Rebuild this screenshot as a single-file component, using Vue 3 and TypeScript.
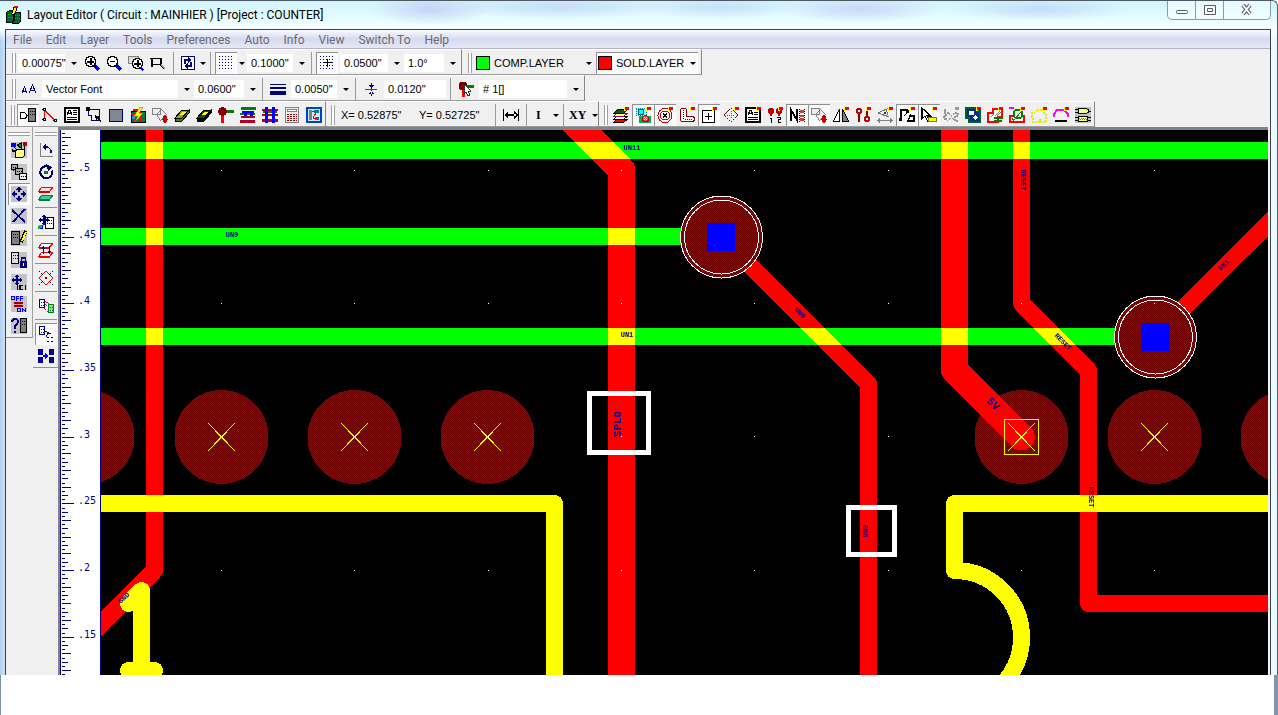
<script setup lang="ts">
interface Tool {
  name: string
  icon: string
  on?: boolean
}

const mark = '<path fill="#ff0" d="M11 0h2v4h-2z"/><path fill="#f00" d="M12 0h4v3h-4z"/>'
const chip = (x: number, y: number, w: number, h: number, fill = '#808080', stroke = '#000') =>
  `<rect x="${x + 0.5}" y="${y + 0.5}" width="${w}" height="${h}" fill="${fill}" stroke="${stroke}"/>` +
  `<path stroke="${stroke}" stroke-dasharray="1 1" d="M${x + 2} ${y + 3.5}h${w - 2}M${x + 2} ${y + 6.5}h${w - 2}"/>`
const lens = (inner: string) =>
  `<circle cx="6.500" cy="6.500" r="5" fill="#fff" stroke="#000" stroke-width="1.400"/>${inner}<path stroke="#00f" stroke-width="3" d="M10.500 10.500l4.500 4.500"/><path stroke="#000" d="M10 10l3 3"/>`
const moveArrows =
  '<path stroke="#000080" stroke-width="2" d="M8 2v12M2 8h12"/><path fill="#000080" d="M8 0l3 4h-6zM8 16l3-4h-6zM0 8l4-3v6zM16 8l-4-3v6z"/><path fill="#c4c4c8" d="M6 6h4v4h-4z"/>'
const smallArrows =
  '<path stroke="#000080" stroke-width="1.200" d="M6 1v10M1 6h10"/><path fill="#000080" d="M6 0l2.500 3h-5zM6 12l2.500-3h-5zM0 6l3-2.500v5zM12 6l-3-2.500v5z"/>'
const slab = (top: string, side: string) =>
  `<path fill="${top}" stroke="#000" d="M1 11l7-8h7l-7 8z"/><path fill="${side}" stroke="#000" d="M1 11h7l7-8v3l-7 8h-7z"/><path fill="#ff0" d="M6 8l2-3h4l-2 3z"/>`
const sheet = (y: number, fill: string, stroke: string) =>
  `<path fill="${fill}" stroke="${stroke}" d="M1 ${y + 5}l3-4h11l-3 4z"/>`

const icons: Record<string, string> = {
  zoomIn: lens('<path fill="#000" d="M3 6h7v2h-7zM6 3h2v7h-2z"/>'),
  zoomOut: lens('<path fill="#000" d="M4 6h5v1h-5z"/>'),
  zoomBox: '<path fill="#ddd" stroke="#808080" d="M.5 1.500h10v7h-10z"/><circle cx="9.500" cy="8.500" r="5" fill="#fff" stroke="#000" stroke-width="1.400"/><path fill="#000" d="M6 8h7v2h-7zM9 5h2v7h-2z"/><path stroke="#00f" stroke-width="2" d="M13 13l2.500 2.500"/>',
  zoomWindow: '<path stroke="#000" stroke-width="1.200" d="M2 3.500h9v6h-9zM0 3.500h2M2 9.500v2"/><path stroke="#000" stroke-width="2.500" d="M10 9l5 5"/><path stroke="#aaa" d="M11 9.500l4 4"/>',
  fit: '<path fill="#fff" stroke="#000080" stroke-width="1.500" d="M1.500 1.500h13v13h-13z"/><path stroke="#000080" stroke-width="1.300" d="M5 9v-4h4M11 7v4h-4"/><path fill="#000080" d="M8 2l4 3-4 3zM8 8l-4 3 4 3z"/>',
  grid: '<path stroke="#000080" stroke-dasharray="1 2" d="M1 1.500h15M1 4.500h15M1 7.500h15M1 10.500h15M1 13.500h15"/>',
  snap: '<path stroke="#000080" stroke-dasharray="1 2" d="M1 1.500h15M1 4.500h15M1 7.500h15M1 10.500h15M1 13.500h15"/><path stroke="#000" d="M8.500 4v8M5 7.500h8"/>',
  letters: '<path stroke="#000080" d="M1 12l2.500-6 2.500 6M2 10h3M8 12l3.500-8 3.500 8M9 9.500h5"/>',
  lineWidth: '<path fill="#000080" d="M0 3h16v1h-16zM0 6h16v2h-16zM0 10h16v4h-16z"/>',
  spacing: '<path fill="#f00" d="M2 8h12v1h-12z"/><path fill="#000080" d="M8 2h1v6h-1zM6 4h5l-2 3h-1zM8 9h1v6h-1zM6 13h5l-2-3h-1z"/>',
  pin: '<path fill="#008000" d="M9 4h7v3h-7z"/><path fill="#f00" d="M4 8h3v8h-3z"/><circle cx="5" cy="5" r="4.500" fill="#800000"/><path fill="#fff" stroke="#000" stroke-width=".8" d="M6 3v10l2-2 2 4 2-1-2-4h3z"/>',
  component: '<path stroke="#000" d="M.5 5.500h3q3 0 3 3t-3 3h-3z"/><path stroke="#000" d="M6 8.500h2"/>' + chip(8, 1, 7, 13),
  net: '<path stroke="#f00" stroke-width="1.300" d="M2.500 3l11 11M2.500 3v9"/><g fill="#fff" stroke="#000"><circle cx="2.500" cy="2.500" r="1.500"/><circle cx="2.500" cy="12.500" r="1.500"/><circle cx="13.500" cy="13.500" r="1.500"/></g>',
  page: '<path fill="#fff" stroke="#000" stroke-width="1.200" d="M1 1h14v14h-14z"/><path stroke="#000" d="M3 8l2-5h1l2 5M4 6.500h3M9 3.500h4M9 5.500h4M9 7.500h4M3 10.500h10M3 12.500h10"/>',
  shape: '<path stroke="#000080" d="M2 2.500h11.500v11h-8v-5h-3v-5"/><path fill="#000" d="M0 0h4v4h-4zM9 8l5 2-2 1 3 3-1 1-3-3-1 2z"/>',
  fill: '<path fill="#808890" stroke="#000080" d="M1.500 2.500h13v12h-13z"/>',
  rats: '<path fill="#008040" stroke="#000" d="M1 4h14v11h-14z"/><path stroke="#f00" stroke-width="2" d="M1 7h4v7M11 5v10M3 3h5"/><path fill="#00a0ff" d="M2 9h3v3h-3z"/><path fill="#ff0" stroke="#a08000" stroke-width=".6" d="M10 0l-6 9h4l-3 6 8-9h-4l4-6z"/>',
  bucket: '<path fill="#eee" stroke="#808080" d="M.5 1.500h8v6h-8zM4.500 7.500l5-5 5 5-6 6z"/><path fill="#c00" d="M13 7c4 5 3 9 0 9s-4-4 0-9z"/>',
  board: slab('#a0a020', '#408000'),
  boardDark: slab('#005000', '#000'),
  via: '<path fill="#008000" d="M8 3h8v3h-8z"/><path fill="#f00" d="M3 7h3v9h-3z"/><circle cx="4.500" cy="4.500" r="4.300" fill="#800000"/>',
  stackH: '<path fill="#008000" d="M1 0h15v3h-15zM0 6h15v2h-15z"/><path fill="#00f" d="M2 4h12v2h-12zM4 6h3v5h-3zM10 6h3v5h-3z"/><path fill="#b00020" d="M1 9h14v2h-14zM0 13h15v3h-15z"/>',
  stackV: '<path fill="#b00020" d="M0 2h16v2h-16zM0 7h16v2h-16zM0 12h16v3h-16z"/><path fill="#008000" d="M1 4h14v2h-14z"/><path fill="#00f" d="M3 0h3v16h-3zM10 0h3v16h-3z"/>',
  calc: '<path fill="#eee" stroke="#808080" d="M1.500.5h13v15h-13z"/><path fill="#fff" stroke="#808080" d="M3.500 2.500h9v2h-9z"/><path stroke="#800000" stroke-dasharray="2 1" d="M3 7.500h10M3 9.500h10M3 11.500h10M3 13.500h10"/>',
  sheetNet: '<path fill="#c8ecff" stroke="#0040d0" stroke-width="1.300" d="M1 1h14v14h-14z"/><path fill="#808080" d="M3 3h3v10h-3z"/><path fill="#008080" d="M8 3h5v3h-5zM9 10h4v3h-4z"/><path stroke="#f00" d="M6 4h2M10 6l-3 5 4 1"/>',
  dimension: '<path fill="#000" d="M0 2h1v12h-1zM15 2h1v12h-1zM3 7h10v2h-10zM1 8l4-4v8zM15 8l-4-4v8z"/>',
  layers: '<path fill="#f00" stroke="#000" d="M1 15l3-3h11l-4 3z"/><path fill="#fff" stroke="#000" d="M1 12l3-3h11l-4 3z"/><path fill="#ff8" stroke="#808" d="M1 9l3-3h11l-4 3z"/><path fill="#006000" stroke="#000" d="M1 6l4-4h10l-4 4z"/>' + mark,
  vias: '<path fill="#9ff" stroke="#008080" stroke-dasharray="1 1" d="M1 1h10v7h-10z"/><circle cx="6" cy="5" r="3" fill="#0ff" stroke="#006080"/><path fill="#00b050" d="M4 9h12v7h-12z"/><circle cx="10.500" cy="11.500" r="3" fill="#f44" stroke="#c00000"/><path stroke="#fff" d="M9 10l3 3M12 10l-3 3"/>' + mark,
  target: '<g stroke="#c00000"><circle cx="8" cy="8.500" r="7"/><circle cx="8" cy="8.500" r="4.500"/></g><path stroke="#000" d="M6 6.500l4 4M10 6.500l-4 4"/>' + mark,
  track: '<path fill="#fff" stroke="#800000" d="M3.500 1.500h2q2 0 2 2v6h5q3 0 3 2.500t-3 2.500h-9q-2 0-2-2v-9q0-2 2-2z"/><path stroke="#00f" stroke-dasharray="1 1" d="M4.500 3v9h8"/>' + mark,
  cross: '<path fill="#fff" stroke="#000" stroke-width="1.200" d="M1.500 3.500h12v12h-12z"/><path fill="#000" d="M4 9h7v1h-7zM7 6h1v7h-1z"/>' + mark,
  diamond: '<path stroke="#800000" stroke-dasharray="2 1" d="M8 1l7 7-7 7-7-7z"/><path stroke="#008080" stroke-dasharray="1 1" d="M8 4v8M4 8h8"/>' + mark,
  notes: '<path fill="#fff" stroke="#000" stroke-width="1.200" d="M1 1h14v14h-14z"/><path stroke="#000" d="M3 8l2-5h1l2 5M4 6.500h3M9 5.500h4M9 7.500h4M3 10.500h10M3 12.500h10"/>' + mark,
  numbers: '<g fill="#c00000"><circle cx="4" cy="4" r="3"/><circle cx="12" cy="4" r="3"/><path d="M3 6h2v3h-2zM11 6h2v3h-2z"/></g><path stroke="#000" d="M3 11.500h1.500v4.500M10 10.500h3.500v2h-2.500v2.500h3"/>' + mark,
  name: '<path stroke="#000" stroke-width="2" d="M2 14v-11l6 10v-11"/><path fill="#c04040" d="M11 3h4v3h-4zM11 8h4v2h-4zM11 11h4v3h-4z"/><path stroke="#000" stroke-dasharray="1 1" d="M10.500 2v13M15.500 2v13"/>',
  mirror: '<path fill="#fff" stroke="#000" d="M6.500 2v12h-6z"/><path fill="#808080" stroke="#000" d="M9.500 2v12h6z"/>' + mark,
  pads: '<path fill="#800000" d="M3 4h2v11h-2zM11 2h2v9h-2z"/><g fill="#fff" stroke="#c00000" stroke-width="2"><circle cx="4" cy="4" r="2.300"/><circle cx="12" cy="12" r="2.300"/></g>' + mark,
  eye: '<path stroke="#707070" d="M12 1l-11 5 11 4M9 3q3 4 0 6"/><circle cx="8" cy="6" r="1.500" fill="#333"/><path stroke="#808080" d="M1 13.500h14M3 11.500l-2 2 2 2M13 11.500l2 2-2 2"/>' + mark,
  polyline: '<path stroke="#000" stroke-width="1.300" d="M2 13v-10h6v3l-3 3M9 14l2-5h4v5zM11 7l4 4"/><path fill="#000" d="M0 11h3v3h-3zM7 3h3v3h-3z"/>' + mark,
  pointer: '<path fill="#fff" stroke="#000" stroke-width="1.200" d="M1 1v11l3-3 3 6 2-1-3-5h4z"/><path fill="#ff0" stroke="#808000" d="M7.500 10.500h8v4h-8z"/>' + mark,
  snapOff: '<path stroke="#999" stroke-width="1.500" stroke-dasharray="2 1" d="M2 2v12M1 4l4 2-4 4 4 4M6 6l5 7M11 6l-5 7M12 6h3v3h-3v5h4"/><path fill="#999" d="M12 0h4v3h-4z"/>',
  zones: '<path fill="#003090" stroke="#006020" stroke-width="2" d="M1 1h10v3h4v11h-11v-4h-3z"/><path fill="#fff" d="M4 4h5v4h-5z"/><circle cx="10.500" cy="10.500" r="2.300" fill="#fff"/>' + mark,
  hatch: '<path fill="#fff" stroke="#f00" stroke-width="1.800" d="M1 6h5v-4h9v8h-4v5h-10z"/><path stroke="#008000" stroke-width="2" d="M7 11h9M7 14h8"/><path stroke="#777" d="M4 10l3-3M8 9l5-5M10 9l4-4"/>' + mark,
  hatchVia: '<path fill="#fff" stroke="#f00" stroke-width="2" d="M1 9h14v6h-14z"/><circle cx="9" cy="7" r="4.500" fill="#dfd" stroke="#008000" stroke-width="2"/><path stroke="#555" d="M4 14l8-9M3 11l2 3"/><path fill="#f0f" d="M0 0h5v2h-5z"/>' + mark,
  outline: '<path stroke="#e8e800" stroke-width="1.400" stroke-dasharray="2 1" d="M6 3h7v4l2 1v7h-5v-2h-2v2h-6v-3l-1-2v-4h3z"/>' + mark,
  arc: '<path stroke="#f0f" stroke-width="2" d="M1 10v-3l3-4h7l4 4v3"/><path fill="#000" d="M2 13h12v2h-12z"/>' + mark,
  gates: '<path fill="#c0c0c0" d="M0 0h16v16h-16z"/><path fill="#ff8" stroke="#000" d="M3.500 1.500h6q4 0 4 2.500t-4 2.500h-6zM3.500 9.500h9v5h-9z"/><path stroke="#000" d="M0 2.500h3M0 5.500h3M13 4.500h3M0 10.500h3M0 13.500h3M13 10.500h3M13 13.500h3"/><path stroke="#808000" stroke-dasharray="1 1" d="M4 11.500h8M5 12.500h8"/>',
  place: '<circle cx="2.500" cy="3" r="2.500" fill="#00f"/><path fill="#008040" stroke="#000" d="M6 3l4-2v5z"/><path fill="#c00000" d="M12 0h4v4h-4z"/><path fill="#000" d="M1 7l5 2-5 1z"/><path fill="#ff8" stroke="#000" d="M4.500 9.500l2-2h7v6l-2 2h-7z"/><path stroke="#000" d="M3 5l3 3M13.500 4v3"/>',
  copies: chip(0, 0, 6, 5, '#aaa') + chip(4, 4, 7, 6, '#aaa') + chip(8, 9, 7, 6, '#eee'),
  move: moveArrows,
  remove: '<path stroke="#000080" stroke-width="1.800" d="M1 2l13 12M14 1l-12 13"/>',
  edit: chip(0, 1, 8, 13) + '<path stroke="#000" stroke-width="3.500" d="M15 1l-5 11"/><path stroke="#ff0" stroke-width="1.800" d="M15 2l-4 9"/>',
  lock: chip(0, 0, 7, 11, '#ddd') + '<path fill="#000080" d="M9 9h7v7h-7z"/><path stroke="#000080" stroke-width="1.300" d="M10.500 9v-3h4v3"/><path fill="#fff" d="M12 11h1v3h-1z"/>',
  refdes: smallArrows + '<path stroke="#000" stroke-width="1.300" d="M6.500 11v5M12 11.500h-3v4h3M14.500 11v5"/>',
  onOff: '<path stroke="#00f" d="M.5.5h3v3h-3zM8 .5h-2.500v4M5.500 2.500h2M12 .500h-2.500v4M9.500 2.500h2M6.500 12.500h3v3h-3zM11.500 16v-3.500l3 3v-3.500"/><path fill="#900" d="M3 6h9v2h-9zM3 9h9v2h-9z"/><path stroke="#f88" d="M4 8.500h7"/>',
  query: '<path stroke="#000080" stroke-width="2" d="M1 4q0-3 3-3t3 3q0 2-3 4v3M4 13v2"/>' + chip(9, 0, 6, 14),
  undo: '<path stroke="#808080" d="M2.500 1v13h12"/><path stroke="#000080" stroke-width="1.300" d="M5 5h5l3 3v3"/><path fill="#000080" d="M4 5l4-4v8z"/>',
  rotate: '<path stroke="#000060" stroke-width="2.200" d="M10 2.500a6 6 0 1 0 4 4"/><path fill="#000060" d="M8 0l6 3-4 4z"/><circle cx="8" cy="8.500" r="2" fill="#008040"/>',
  flipLayer: sheet(0, '#fdd', '#f00') + sheet(8, '#4c9', '#008040') + '<path fill="#d00" d="M1 5h11v2h-11z"/><path fill="#008040" d="M1 13h11v2h-11z"/>',
  moveBlock: chip(7, 3, 8, 11, '#fff') + smallArrows + '<circle cx="2" cy="13" r="2" fill="#0b4"/><path fill="#00f" d="M4 11h1v4h-3v-1h2z"/>',
  swapLayer: sheet(0, '#fff', '#f00') + sheet(9, '#fff', '#f00') + '<path stroke="#f00" d="M1 6.500h11M1 15.500h11"/><path stroke="#000080" d="M5.500 6v6M11.500 4v6"/><path fill="#000080" d="M5.500 4l2 3h-4zM11.500 12l2-3h-4z"/>',
  region: '<path stroke="#f00" stroke-width="1.200" d="M8 1l7 7-7 7-7-7z"/><path stroke="#000" stroke-dasharray="2 1" d="M1 1l4 4M15 1l-4 4M1 15l4-4M15 15l-4-4"/><path fill="#800" d="M7 7h2v2h-2z"/>',
  transfer: chip(1, 1, 5, 8, '#fff', '#000080') + chip(10, 6, 5, 8, '#8d8', '#008020') + '<path stroke="#f00" stroke-dasharray="1 1" d="M7 3l4 3M6 10l4 4M7 6l3 3"/>',
  group: chip(1, 0, 5, 8, '#fff', '#000080') + '<path stroke="#000080" d="M7 5l6 3M11 6l-3 5"/><path stroke="#000" stroke-dasharray="2 2" d="M9 11.500h7M9 15.500h7"/>',
  swapParts: '<g fill="#000080"><path d="M0 1h5v6h-5zM0 9h5v6h-5zM11 1h5v6h-5zM11 9h5v6h-5z"/></g><path fill="#00f" d="M2 2h1v4h-1zM2 10h1v4h-1zM13 2h1v4h-1zM13 10h1v4h-1zM5 7h2v-2l4 3-4 3v-2h-2z"/>',
}

const toList = (s: string): Tool[] =>
  s.split(' ').map((n) => ({ name: n.replace('*', ''), icon: icons[n.replace('*', '')], on: n.endsWith('*') }))

const menus = ['File', 'Edit', 'Layer', 'Tools', 'Preferences', 'Auto', 'Info', 'View', 'Switch To', 'Help']
const zoomTools = toList('zoomIn zoomOut zoomBox zoomWindow')
const drawTools = toList('component* net page shape fill rats bucket board boardDark via stackH stackV calc sheetNet')
const viewTools = toList(
  'layers vias* target* track cross* diamond notes numbers name* bucket* mirror pads eye polyline* pointer* snapOff zones hatch hatchVia outline arc gates',
)
const partTools = toList('place copies move* remove edit lock refdes onOff query')
const blockGroups = ['undo rotate flipLayer', 'moveBlock', 'swapLayer', 'region', 'transfer', 'group* swapParts'].map(toList)

const ticks = Array.from({ length: 260 }, (_, i) => {
  const n = i - 9
  const len = n % 16 === 0 ? 12 : n % 4 === 0 ? 9 : n % 2 === 0 ? 6 : 3
  return `M1 ${Math.round(40 + (n * 200) / 48) + 0.5}h${len}`
}).join('')
const scale = ['.5', '.45', '.4', '.35', '.3', '.25', '.2', '.15'].map((text, i) => ({
  text,
  y: Math.round(41 + (i * 200) / 3),
}))

const padXs = [87, 221, 354, 487, 1021, 1154, 1287]
const vias = [
  { x: 721, y: 237 },
  { x: 1155, y: 337 },
]
const dots = [221, 354, 488, 621, 754, 888, 1021, 1154].flatMap((x) =>
  [170, 303, 436, 570].filter((y) => !(x === 1021 && y === 170)).map((y) => ({ x, y })),
)
const labels = [
  { t: 'UN11', x: 632, y: 148, r: 0, s: 7 },
  { t: 'UN9', x: 232, y: 235, r: 0, s: 7 },
  { t: 'UN1', x: 627, y: 335, r: 0, s: 7 },
  { t: 'UN9', x: 800, y: 313, r: 45, s: 7 },
  { t: 'RESET', x: 1023, y: 180, r: 90, s: 7 },
  { t: 'RESET', x: 1063, y: 342, r: 45, s: 7 },
  { t: 'RESET', x: 1091, y: 497, r: 90, s: 7 },
  { t: 'UN1', x: 1224, y: 265, r: -45, s: 7 },
  { t: 'UN9', x: 866, y: 531, r: -90, s: 7 },
  { t: 'GND', x: 124, y: 598, r: -45, s: 7 },
  { t: 'SPL0', x: 618, y: 424, r: -90, s: 11 },
  { t: '5V', x: 993, y: 404, r: 45, s: 11 },
]
</script>

<template>
  <div class="page">
    <div class="window">
      <header class="titlebar">
        <svg class="app-icon" width="18" height="18" viewBox="0 0 18 18">
          <path fill="#063" stroke="#000" d="M1.500 6.500l3-2h5v10l-3 2h-5zM9.500 6.500h6v9l-2 2h-6z" />
          <path stroke="#0c0" stroke-dasharray="1 1" d="M3 8.500h5M3 11.500h5M10 9.500h5M10 12.500h5" />
          <path stroke="#000" stroke-width="4" d="M11 0l-3 9" />
          <path stroke="#ff0" stroke-width="2" d="M11 1l-3 7" />
          <path fill="#f00" d="M9 0h4v2h-4z" />
        </svg>
        <h1>Layout Editor ( Circuit : MAINHIER ) [Project : COUNTER]</h1>
        <div class="caption">
          <button aria-label="Minimize"><svg width="14" height="12"><rect x="1.500" y="6.500" width="11" height="3" rx="1" fill="#fff" stroke="#555a68" /></svg></button>
          <button aria-label="Maximize"><svg width="14" height="12"><path fill="#fff" stroke="#555a68" d="M1.500 1.500h11v9h-11z" /><path fill="#fff" stroke="#555a68" d="M4.500 4.500h5v3h-5z" /></svg></button>
          <button class="close" aria-label="Close"><svg width="14" height="12"><path stroke="#555a68" stroke-width="4" d="M3 1l7 9M10 1l-7 9" /><path stroke="#fff" stroke-width="2" d="M3 1l7 9M10 1l-7 9" /></svg></button>
        </div>
      </header>

      <div class="client">
        <nav class="menubar">
          <button v-for="m in menus" :key="m">{{ m }}</button>
        </nav>

        <div class="row">
          <div class="bar">
            <i class="grip" />
            <label class="combo w61"><select aria-label="Zoom scale"><option>0.00075"</option></select></label>
            <div class="icons">
              <button v-for="t in zoomTools" :key="t.name" class="tool" :aria-label="t.name"><svg viewBox="0 0 16 16" v-html="t.icon" /></button>
            </div>
            <i class="sep" />
            <button class="split" aria-label="Fit"><svg viewBox="0 0 16 16" v-html="icons.fit" /><b class="arrow" /></button>
            <i class="sep" />
            <button class="tool on" aria-label="Show grid"><svg viewBox="0 0 16 16" v-html="icons.grid" /></button>
            <button class="drop" aria-label="Grid options"><b class="arrow" /></button>
            <label class="combo w60"><select aria-label="Grid"><option>0.1000"</option></select></label>
            <i class="sep" />
            <button class="tool on" aria-label="Snap"><svg viewBox="0 0 16 16" v-html="icons.snap" /></button>
            <label class="combo w62"><select aria-label="Snap step"><option>0.0500"</option></select></label>
            <label class="combo w54"><select aria-label="Angle"><option>1.0°</option></select></label>
          </div>
          <div class="bar">
            <i class="grip" />
            <label class="combo layer w120"><i class="swatch green" /><select aria-label="Component layer"><option>COMP.LAYER</option></select></label>
            <label class="combo layer pressed w102"><i class="swatch red" /><select aria-label="Solder layer"><option>SOLD.LAYER</option></select></label>
          </div>
        </div>

        <div class="row">
          <div class="bar">
            <i class="grip" />
            <span class="tool"><svg viewBox="0 0 16 16" v-html="icons.letters" /></span>
            <label class="combo w150"><select aria-label="Font"><option>Vector Font</option></select></label>
            <label class="combo w64"><select aria-label="Text height"><option>0.0600"</option></select></label>
            <i class="sep" />
            <span class="tool"><svg viewBox="0 0 16 16" v-html="icons.lineWidth" /></span>
            <label class="combo w60"><select aria-label="Line width"><option>0.0050"</option></select></label>
            <i class="sep" />
            <span class="tool"><svg viewBox="0 0 16 16" v-html="icons.spacing" /></span>
            <input class="field" aria-label="Clearance" value="0.0120&quot;" />
            <i class="sep" />
            <span class="tool"><svg viewBox="0 0 16 16" v-html="icons.pin" /></span>
            <label class="combo w102"><select aria-label="Padstack"><option># 1[]</option></select></label>
          </div>
        </div>

        <div class="row">
          <div class="bar tight">
            <i class="grip" />
            <div class="icons">
              <button v-for="t in drawTools" :key="t.name" class="tool" :class="{ on: t.on }" :aria-label="t.name"><svg viewBox="0 0 16 16" v-html="t.icon" /></button>
            </div>
          </div>
          <div class="bar tight">
            <i class="grip" />
            <output class="readout">X= 0.52875"</output>
            <output class="readout">Y= 0.52725"</output>
            <i class="sep" />
            <button class="tool" aria-label="Dimension"><svg viewBox="0 0 16 16" v-html="icons.dimension" /></button>
            <i class="sep" />
            <button class="split serif">I<b class="arrow" /></button>
            <i class="sep" />
            <button class="split serif">XY<b class="arrow" /></button>
          </div>
          <div class="bar tight">
            <i class="grip" />
            <div class="icons">
              <button v-for="t in viewTools" :key="t.name" class="tool" :class="{ on: t.on }" :aria-label="t.name"><svg viewBox="0 0 16 16" v-html="t.icon" /></button>
            </div>
          </div>
        </div>

        <main class="work">
          <aside class="palette first">
            <i class="hgrip" />
            <button v-for="t in partTools" :key="t.name" class="tool gray" :class="{ on: t.on }" :aria-label="t.name"><svg viewBox="0 0 16 16" v-html="t.icon" /></button>
          </aside>
          <aside class="palette">
            <i class="hgrip" />
            <div v-for="(g, i) in blockGroups" :key="i" class="vgroup">
              <button v-for="t in g" :key="t.name" class="tool" :class="{ on: t.on }" :aria-label="t.name"><svg viewBox="0 0 16 16" v-html="t.icon" /></button>
            </div>
          </aside>
          <div class="view">
            <svg class="ruler">
              <path class="tick" :d="ticks" />
              <text v-for="s in scale" :key="s.text" x="17" :y="s.y">{{ s.text }}</text>
            </svg>
            <svg class="board">
              <defs>
                <pattern id="dither" width="2" height="2" patternUnits="userSpaceOnUse">
                  <rect width="2" height="2" fill="#9c0000" />
                  <rect width="1" height="1" fill="#700000" />
                  <rect x="1" y="1" width="1" height="1" fill="#700000" />
                </pattern>
              </defs>
              <g transform="translate(-101 -130)">
                <g fill="none" stroke="#0f0" stroke-width="17">
                  <path d="M90 150.500h3000M90 236.500h631M90 336.500h1065" />
                </g>
                <circle v-for="x in padXs" :key="x" :cx="x + 0.5" cy="437" r="47" fill="url(#dither)" />
                <g class="copper" fill="none" stroke="#f00" stroke-width="17" stroke-linejoin="round">
                  <path d="M154.500 100v470.500l-80 80M721.500 237l147 147v2000M1155 337l400-400M1021.500 100v203.500l67 67v233h3000" />
                  <path stroke-width="27" stroke-linecap="round" d="M552 100l69.500 69.500v2000M954.500 100v270l67 67" />
                </g>
                <g v-for="v in vias" :key="v.x">
                  <circle :cx="v.x + 0.5" :cy="v.y" r="41" fill="url(#dither)" stroke="#fff" />
                  <circle :cx="v.x + 0.5" :cy="v.y" r="37" fill="none" stroke="#fff" />
                  <rect :x="v.x - 14" :y="v.y - 14" width="28" height="28" fill="#00f" />
                </g>
                <g fill="none" stroke="#ff0" stroke-width="17" stroke-linejoin="round" stroke-linecap="round">
                  <path d="M90 503.500h464.500v2000M4000 503.500h-3045.500v67a67 67 0 0 1 0 134M128.500 603.500l13-13v80M128.500 670.500h26" />
                </g>
                <g stroke="#ff0" fill="none">
                  <path v-for="x in padXs.slice(1)" :key="x" :d="`M${x - 13} 423l27 28M${x + 14} 423l-27 28`" />
                  <path d="M1004.500 419.500h34v35h-34z" />
                </g>
                <g fill="none" stroke="#fff" stroke-width="5">
                  <path d="M589.500 393.500h59v59h-59zM848.500 507.500h46v47h-46z" />
                </g>
                <rect v-for="d in dots" :key="`${d.x}-${d.y}`" :x="d.x" :y="d.y" width="1" height="1" fill="#fff" />
                <text
                  v-for="(l, i) in labels"
                  :key="i"
                  class="net"
                  :font-size="l.s"
                  :transform="`translate(${l.x} ${l.y}) rotate(${l.r})`"
                >{{ l.t }}</text>
              </g>
            </svg>
          </div>
        </main>
      </div>
    </div>
    <footer class="below" />
  </div>
</template>

<style>
body {
  margin: 0;
}
</style>

<style scoped>
.page {
  display: flex;
  flex-direction: column;
  height: 100vh;
  font: 11px/16px "Liberation Sans", Arial, sans-serif;
  color: #000;
}
.page *,
.page *::after {
  box-sizing: border-box;
}
button,
select,
input {
  font: inherit;
  color: inherit;
  margin: 0;
  padding: 0;
  border: 0;
  background: none;
  border-radius: 0;
}
i,
b {
  display: block;
  flex: none;
}
svg {
  display: block;
  flex: none;
}
.window {
  flex: 1;
  min-height: 0;
  display: flex;
  flex-direction: column;
  padding: 0 6px 0 5px;
  background:
    radial-gradient(ellipse 60px 16px at 430px 8px, #c4d4f6, transparent),
    radial-gradient(ellipse 110px 12px at 560px 6px, #c8dcf8, transparent),
    radial-gradient(ellipse 80px 12px at 720px 6px, #c8e0f8, transparent),
    radial-gradient(ellipse 80px 14px at 860px 8px, #c8d8f8, transparent),
    radial-gradient(ellipse 90px 12px at 1040px 8px, #c4dcf8, transparent),
    linear-gradient(#d0f4fc 0, #e4fcff 16px, #f8ffff 29px, transparent 40px),
    linear-gradient(90deg, #b4ccf0 0, #c8e4f8 5px, #e8fcff 50%, #e8fcff);
  border-top: 1px solid #505864;
  border-right: 1px solid #505864;
  border-top-right-radius: 6px;
}
.titlebar {
  display: flex;
  flex: none;
  align-items: flex-start;
  height: 28px;
}
.app-icon {
  margin-top: 5px;
  shape-rendering: crispEdges;
}
h1 {
  flex: 1;
  margin: 5px 0 0 4px;
  font: 12px/18px Roboto, "Noto Sans", sans-serif;
}
.caption {
  display: flex;
  height: 19px;
  border: 1px solid #8c98a8;
  border-top: 0;
  border-radius: 0 0 5px 5px;
  background: rgba(255, 255, 255, 0.45);
}
.caption button {
  display: flex;
  align-items: center;
  justify-content: center;
  width: 28px;
  border-right: 1px solid #8c98a8;
}
.caption .close {
  width: 46px;
  border-right: 0;
}
.client {
  flex: 1;
  min-height: 0;
  display: flex;
  flex-direction: column;
  border: 1px solid #404048;
  border-bottom: 0;
  background: #f1f0f1;
}
.menubar {
  flex: none;
  display: flex;
  gap: 14px;
  height: 19px;
  padding-left: 7px;
  border-bottom: 1px solid #b4b4c8;
  background: linear-gradient(#fafaff, #d4daf0 50%, #e6e8f6);
  font: 12px/20px Roboto, "Noto Sans", sans-serif;
  color: #6a6a72;
}
.row {
  flex: none;
  display: flex;
  height: 26px;
}
.bar {
  display: flex;
  align-items: center;
  gap: 2px;
  padding: 2px 3px 0 6px;
  border-top: 1px solid #fff;
  border-right: 1px solid #868686;
  border-bottom: 1px solid #9a9a9a;
}
.bar.tight {
  padding: 2px 0 0 5px;
}
.grip {
  width: 4px;
  height: 20px;
  border: 1px solid #a0a0a0;
  border-width: 0 1px;
  background: #fff;
}
.sep {
  width: 1px;
  height: 22px;
  margin: 0 2px;
  background: #9a9a9a;
}
.icons {
  display: flex;
}
.tool {
  display: flex;
  flex: none;
  align-items: center;
  justify-content: center;
  width: 22px;
  height: 22px;
}
.tool svg,
.split svg {
  width: 16px;
  height: 16px;
  fill: none;
  shape-rendering: crispEdges;
}
.on,
.pressed {
  background: #fafafa;
  box-shadow: inset 1px 1px #909090, inset -1px -1px #fff;
}
.gray svg {
  background: #c4c4c8;
}
.arrow,
.combo::after {
  width: 0;
  height: 0;
  border: 3px solid transparent;
  border-top-color: #000;
  border-bottom: 0;
}
.split {
  display: flex;
  align-items: center;
  justify-content: space-between;
  width: 28px;
  height: 22px;
  padding: 0 0 0 2px;
}
.serif {
  font: bold 12px/16px "Liberation Serif", serif;
  padding-left: 5px;
}
.serif:last-child {
  width: 30px;
  padding-left: 1px;
}
.drop {
  width: 6px;
}
.combo {
  position: relative;
  display: flex;
  align-items: center;
  height: 20px;
}
.combo::after {
  content: "";
  position: absolute;
  right: 2px;
  top: calc(50% - 1px);
  pointer-events: none;
}
.combo select {
  appearance: none;
  flex: 1;
  min-width: 0;
  height: 18px;
  padding: 0 12px 0 4px;
  background: linear-gradient(#fff, #fff) no-repeat left / calc(100% - 14px) 100%;
}
.layer select {
  background: none;
}
.layer {
  height: 22px;
  padding-left: 2px;
}
.swatch {
  width: 14px;
  height: 14px;
  border: 1px solid #000;
}
.green {
  background: #0f0;
}
.red {
  background: #f00;
}
.w54 { width: 54px; }
.w60 { width: 60px; }
.w61 { width: 61px; }
.w62 { width: 62px; }
.w64 { width: 64px; }
.w102 { width: 102px; }
.w120 { width: 120px; }
.w150 { width: 150px; }
.field {
  width: 62px;
  height: 18px;
  padding: 0 4px;
  background: #fff;
}
.readout {
  width: 76px;
  padding-left: 4px;
}
.work {
  flex: 1;
  min-height: 0;
  display: flex;
  padding-right: 2px;
}
.palette {
  display: flex;
  flex-direction: column;
  align-items: center;
  align-self: flex-start;
  flex: none;
  width: 25px;
  padding-top: 5px;
  border-bottom: 1px solid #909090;
}
.first {
  width: 27px;
  border-right: 1px solid #a0a0a0;
}
.hgrip {
  width: 22px;
  height: 4px;
  margin-bottom: 3px;
  border: 1px solid #a0a0a0;
  border-width: 1px 0;
  background: #fff;
}
.vgroup + .vgroup {
  margin-top: 2px;
  padding-top: 3px;
  border-top: 1px solid #909090;
}
.view {
  flex: 1;
  min-width: 0;
  display: flex;
  border: 2px solid #808488;
  border-width: 3px 0 0 2px;
}
.ruler {
  width: 41px;
  height: 100%;
  background: #fff;
  border: 1px solid #000080;
  border-width: 0 1px;
}
.tick {
  stroke: #000080;
}
.ruler text {
  font: 10px "DejaVu Sans Mono", monospace;
  fill: #000080;
}
.board {
  flex: 1;
  min-width: 0;
  height: 100%;
  background: #000;
  isolation: isolate;
  shape-rendering: crispEdges;
}
.copper {
  mix-blend-mode: screen;
}
.net {
  font-family: "Liberation Mono", monospace;
  font-weight: bold;
  fill: #000090;
  text-anchor: middle;
  dominant-baseline: central;
}
.below {
  flex: none;
  height: 40px;
  border-left: 1px solid #8090a8;
  border-right: 4px solid #8094b0;
  background: #fff;
}
</style>
